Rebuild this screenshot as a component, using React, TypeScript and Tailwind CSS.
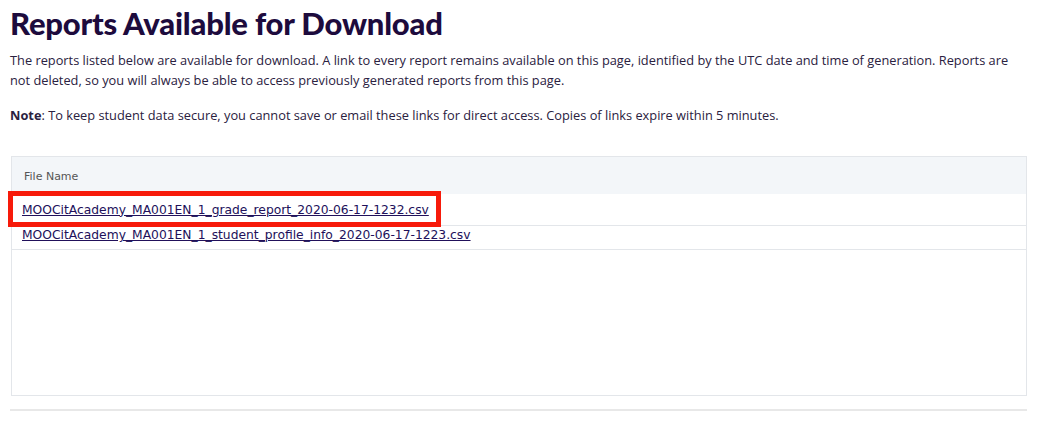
import React from 'react';

const reports = [
	'MOOCitAcademy_MA001EN_1_grade_report_2020-06-17-1232.csv',
	'MOOCitAcademy_MA001EN_1_student_profile_info_2020-06-17-1223.csv',
];

const App: React.FC = () => {
	return (
		<div className="w-[1040px] h-[425px] bg-white px-[10px] pt-[5px] overflow-hidden">
			<h1 className="text-[31px] leading-[36px] font-black text-[#1d0b3d] tracking-[-0.2px]" style={{fontFamily: 'Lato, sans-serif'}}>
				Reports Available for Download
			</h1>
			<div className="text-[12.8px] leading-[20px] text-[#2a2140] mt-[9px]" style={{fontFamily: '"Open Sans", sans-serif'}}>
				<p>
					The reports listed below are available for download. A link to every report remains available on this page, identified by the UTC date and time of generation. Reports are not deleted, so you will always be able to access previously generated reports from this page.
				</p>
				<p className="mt-[15px]">
					<strong className="font-bold">Note</strong>: To keep student data secure, you cannot save or email these links for direct access. Copies of links expire within 5 minutes.
				</p>
			</div>

			<div className="mt-[31px] ml-[1px] w-[1016px] h-[240px] border border-[#e3e6ea]" style={{fontFamily: '"DejaVu Sans", Verdana, sans-serif'}}>
				<div className="h-[37px] bg-[#f3f6f9] flex items-center pl-[12px] pt-[3px] text-[11px] text-[#555]">
					File Name
				</div>
				<div className="h-[32px] flex items-center border-b border-[#e3e6ea] relative">
					<a href="#" className="ml-[10px] mt-[1px] text-[12.3px] text-[#21105a] underline">{reports[0]}</a>
					<div className="absolute left-[-4px] top-[-3px] w-[433px] h-[36px] border-[5px] border-[#f71a0a]" />
				</div>
				<div className="h-[24px] flex items-start border-b border-[#e3e6ea]">
					<a href="#" className="ml-[10px] text-[12.3px] text-[#21105a] underline">{reports[1]}</a>
				</div>
			</div>

			<div className="mt-[13px] w-[1017px] border-t-2 border-[#e8e8e8]" />
		</div>
	);
};

export default App;
